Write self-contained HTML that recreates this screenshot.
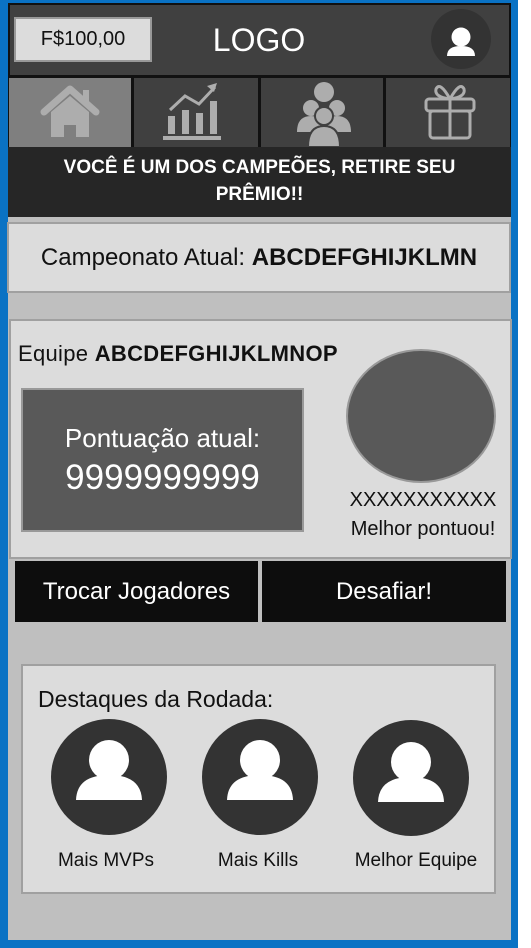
<!DOCTYPE html>
<html><head><meta charset="utf-8"><style>
*{margin:0;padding:0;box-sizing:border-box}
body{width:531px;height:948px;background:#fff;position:relative;overflow:hidden;font-family:"Liberation Sans",sans-serif}
.a{position:absolute}
</style></head><body>
<div class="a" style="left:0;top:0;width:518px;height:948px;background:#0a72c4"></div>
<div class="a" style="left:8px;top:3px;width:503px;height:937px;background:#bfbfbf"></div>
<!-- header -->
<div class="a" style="left:8px;top:3px;width:503px;height:74px;background:#404040;border:2px solid #111"></div>
<div class="a" style="left:14px;top:17px;width:138px;height:45px;background:#dcdcdc;border:2px solid #999;font-size:20px;line-height:41px;text-align:center;color:#111">F$100,00</div>
<div class="a" style="left:199px;top:22px;width:120px;text-align:center;color:#fff;font-size:32px">LOGO</div>
<div class="a" style="left:431px;top:9px;width:60px;height:60px;border-radius:50%;background:#333"></div>
<svg class="a" style="left:431px;top:9px" width="60" height="60"><circle cx="30" cy="28" r="9.5" fill="#fff"/><path d="M16 47 Q16 37 30 37 Q44 37 44 47 Z" fill="#fff"/></svg>
<!-- nav -->
<div class="a" style="left:8px;top:77px;width:503px;height:70px;background:#111"></div>
<div class="a" style="left:9px;top:78px;width:122px;height:69px;background:#7f7f7f"></div>
<div class="a" style="left:134px;top:78px;width:124px;height:69px;background:#404040"></div>
<div class="a" style="left:261px;top:78px;width:122px;height:69px;background:#404040"></div>
<div class="a" style="left:386px;top:78px;width:124px;height:69px;background:#404040"></div>
<svg class="a" style="left:9px;top:78px" width="122" height="69"><path d="M35 34 L61 11 L87 34" fill="none" stroke="#adadad" stroke-width="7" stroke-linecap="round" stroke-linejoin="round"/><path d="M42 34 L61 18 L80 34 V59 H67 V47 H55 V59 H42 Z" fill="#adadad"/><rect x="74" y="12" width="6" height="14" fill="#adadad"/></svg>
<svg class="a" style="left:134px;top:78px" width="124" height="69" fill="#adadad"><rect x="34" y="38" width="7" height="18"/><rect x="48" y="32" width="7" height="24"/><rect x="62" y="35" width="7" height="21"/><rect x="76" y="23" width="7" height="33"/><rect x="29" y="58" width="58" height="4"/><path d="M36 32 L51 18 L65 26 L81 9" fill="none" stroke="#adadad" stroke-width="3"/><path d="M73 8 L83 5 L80 14 Z"/></svg>
<svg class="a" style="left:261px;top:78px" width="122" height="69" fill="#adadad"><circle cx="63" cy="14" r="10"/><circle cx="50" cy="30" r="8"/><circle cx="76" cy="30" r="8"/><path d="M36 54 Q36 38 50 38 Q62 38 62 54Z"/><path d="M64 54 Q64 38 76 38 Q90 38 90 54Z"/><circle cx="63" cy="38" r="9" stroke="#404040" stroke-width="2"/><path d="M47 69 Q47 48 63 48 Q79 48 79 69Z" stroke="#404040" stroke-width="2"/></svg>
<svg class="a" style="left:386px;top:78px" width="124" height="69" fill="none" stroke="#adadad" stroke-width="3"><rect x="40" y="21" width="48" height="12" rx="3"/><rect x="44" y="33" width="40" height="27" rx="3"/><path d="M64 21 V60"/><path d="M64 21 Q54 3 50 11 Q48 19 64 21 Q74 3 78 11 Q80 19 64 21"/></svg>
<!-- banner -->
<div class="a" style="left:8px;top:147px;width:503px;height:70px;background:#262626;color:#fff;font-weight:bold;font-size:19px;line-height:27px;text-align:center;padding:7px 40px 0">VOCÊ É UM DOS CAMPEÕES, RETIRE SEU PRÊMIO!!</div>
<!-- campeonato -->
<div class="a" style="left:7px;top:222px;width:504px;height:71px;background:#dcdcdc;border:2px solid #a0a0a0;font-size:24px;line-height:67px;text-align:center;color:#111;white-space:nowrap">Campeonato Atual: <b>ABCDEFGHIJKLMN</b></div>
<!-- equipe -->
<div class="a" style="left:9px;top:319px;width:503px;height:240px;background:#dcdcdc;border:2px solid #a0a0a0"></div>
<div class="a" style="left:18px;top:341px;font-size:22px;color:#111;white-space:nowrap;letter-spacing:0.3px">Equipe <b>ABCDEFGHIJKLMNOP</b></div>
<div class="a" style="left:21px;top:388px;width:283px;height:144px;background:#595959;border:2px solid #999;color:#fff;text-align:center"><div style="font-size:26px;margin-top:33px">Pontuação atual:</div><div style="font-size:35px;margin-top:4px">9999999999</div></div>
<div class="a" style="left:346px;top:349px;width:150px;height:134px;border-radius:50%;background:#595959;border:2px solid #999"></div>
<div class="a" style="left:330px;top:486px;width:186px;text-align:center;font-size:20px;color:#111;line-height:29px;white-space:nowrap">XXXXXXXXXXX<br>Melhor pontuou!</div>
<!-- buttons -->
<div class="a" style="left:13px;top:559px;width:496px;height:65px;background:#bfbfbf"></div>
<div class="a" style="left:15px;top:561px;width:243px;height:61px;background:#0d0d0d;color:#fff;font-size:24px;line-height:61px;text-align:center">Trocar Jogadores</div>
<div class="a" style="left:262px;top:561px;width:244px;height:61px;background:#0d0d0d;color:#fff;font-size:24px;line-height:61px;text-align:center">Desafiar!</div>
<!-- destaques -->
<div class="a" style="left:21px;top:664px;width:475px;height:230px;background:#dcdcdc;border:2px solid #a0a0a0"></div>
<div class="a" style="left:38px;top:686px;font-size:23px;color:#111">Destaques da Rodada:</div>
<svg class="a" style="left:0;top:700px" width="531" height="200">
<g fill="#333"><circle cx="109" cy="77" r="58"/><circle cx="260" cy="77" r="58"/><circle cx="411" cy="78" r="58"/></g>
<g fill="#fff"><circle cx="109" cy="60" r="20"/><path d="M76 100 Q77 75 109 75 Q141 75 142 100 Z"/><circle cx="260" cy="60" r="20"/><path d="M227 100 Q228 75 260 75 Q292 75 293 100 Z"/><circle cx="411" cy="62" r="20"/><path d="M378 102 Q379 77 411 77 Q443 77 444 102 Z"/></g>
</svg>
<div class="a" style="left:36px;top:850px;width:140px;text-align:center;font-size:19px;color:#111">Mais MVPs</div>
<div class="a" style="left:188px;top:850px;width:140px;text-align:center;font-size:19px;color:#111">Mais Kills</div>
<div class="a" style="left:334px;top:850px;width:164px;text-align:center;font-size:19px;color:#111;white-space:nowrap">Melhor Equipe</div>
</body></html>
